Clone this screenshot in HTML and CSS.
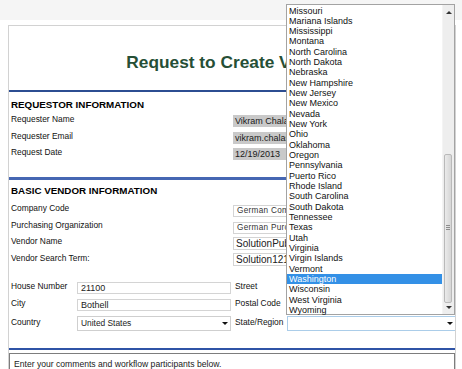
FILE: index.html
```html
<!DOCTYPE html>
<html lang="en">
<head>
    <meta charset="UTF-8">
    <meta name="viewport" content="width=device-width, initial-scale=1.0">
    <title>Request to Create Vendor</title>
    <link rel="stylesheet" href="styles.css">
</head>
<body>
    <div class="topbar"></div>
    <div class="page">
        <h1 class="title">Request to Create Vendor</h1>
        <div class="rule rule-thin"></div>

        <div class="section">
            <h2 class="section-head">REQUESTOR INFORMATION</h2>
            <div class="fields requestor">
                <div class="label">Requester Name</div>
                <div class="value"><span class="readonly">Vikram Chalasani</span></div>
                <div class="label">Requester Email</div>
                <div class="value"><span class="readonly">vikram.chalasani@contoso.com</span></div>
                <div class="label">Request Date</div>
                <div class="value"><span class="readonly short">12/19/2013</span></div>
            </div>
        </div>

        <div class="rule rule-thick"></div>

        <div class="section">
            <h2 class="section-head second">BASIC VENDOR INFORMATION</h2>
            <div class="fields vendor">
                <div class="label">Company Code</div>
                <div class="value"><span class="box small">German Company Code</span></div>
                <div class="label">Purchasing Organization</div>
                <div class="value"><span class="box small">German Purchasing Org</span></div>
                <div class="label">Vendor Name</div>
                <div class="value"><span class="box big">SolutionPublishing</span></div>
                <div class="label">Vendor Search Term:</div>
                <div class="value"><span class="box big">Solution121913</span></div>
            </div>

            <div class="address">
                <div class="label">House Number</div>
                <div class="value"><span class="box addr">21100</span></div>
                <div class="label">Street</div>
                <div class="value"><span class="box addr wide">Bothell Everett Hwy</span></div>

                <div class="label">City</div>
                <div class="value"><span class="box addr">Bothell</span></div>
                <div class="label">Postal Code</div>
                <div class="value"><span class="box addr wide">98021</span></div>

                <div class="label">Country</div>
                <div class="value"><span class="select">United States<i class="arrow"></i></span></div>
                <div class="label">State/Region</div>
                <div class="value"><span class="select focused wide"><i class="arrow"></i></span></div>
            </div>
        </div>

        <div class="rule rule-mid"></div>
        <div class="comments">Enter your comments and workflow participants below.</div>
    </div>

    <div class="state-list">
        <div class="options">
            <div class="option">Missouri</div>
            <div class="option">Mariana Islands</div>
            <div class="option">Mississippi</div>
            <div class="option">Montana</div>
            <div class="option">North Carolina</div>
            <div class="option">North Dakota</div>
            <div class="option">Nebraska</div>
            <div class="option">New Hampshire</div>
            <div class="option">New Jersey</div>
            <div class="option">New Mexico</div>
            <div class="option">Nevada</div>
            <div class="option">New York</div>
            <div class="option">Ohio</div>
            <div class="option">Oklahoma</div>
            <div class="option">Oregon</div>
            <div class="option">Pennsylvania</div>
            <div class="option">Puerto Rico</div>
            <div class="option">Rhode Island</div>
            <div class="option">South Carolina</div>
            <div class="option">South Dakota</div>
            <div class="option">Tennessee</div>
            <div class="option">Texas</div>
            <div class="option">Utah</div>
            <div class="option">Virginia</div>
            <div class="option">Virgin Islands</div>
            <div class="option">Vermont</div>
            <div class="option selected">Washington</div>
            <div class="option">Wisconsin</div>
            <div class="option">West Virginia</div>
            <div class="option">Wyoming</div>
        </div>
        <div class="scrollbar">
            <i class="scroll-up"></i>
            <div class="thumb"><i class="grip"></i></div>
            <i class="scroll-down"></i>
        </div>
    </div>
</body>
</html>
```

FILE: styles.css
```css
body {
    margin: 0;
    height: 369px;
    background: #fff;
    font-family: "Liberation Sans", Arial, sans-serif;
    color: #111;
    overflow: hidden;
}
.topbar {
    height: 20px;
    background: #f5f5f5;
}
.page {
    margin: 5px 0 0 8px;
    width: 446px;
    height: 343px;
    border: 1px solid #d2d2d2;
    border-bottom: none;
    background: #fff;
    overflow: hidden;
}
.title {
    margin: 0;
    height: 64px;
    padding-top: 26px;
    box-sizing: border-box;
    font-size: 17.3px;
    line-height: 20px;
    font-weight: bold;
    text-align: center;
    color: #264f36;
}
.rule-thin {
    border-top: 2px solid #2c4d92;
}
.rule-thick {
    margin-top: 16px;
    border-top: 3px solid #4667b3;
}
.rule-mid {
    margin-top: 16px;
    border-top: 2px solid #2f53a6;
}
.section {
    padding-left: 2px;
}
.section-head {
    margin: 7px 0 0;
    font-size: 9.8px;
    line-height: 12px;
    font-weight: bold;
    color: #000;
}
.section-head.second {
    margin-top: 5px;
}
.label {
    font-size: 8.4px;
    white-space: nowrap;
    color: #111;
}
.value {
    overflow: hidden;
    white-space: nowrap;
}
.fields {
    display: grid;
    grid-template-columns: 222px 1fr;
    align-items: center;
}
.requestor {
    grid-template-rows: repeat(3, 16.5px);
}
.vendor {
    margin-top: 3px;
    grid-template-rows: repeat(4, 16.8px);
}
.readonly {
    display: inline-block;
    width: 160px;
    height: 12px;
    margin-top: 2px;
    padding: 0 2px;
    background: #c9c9c9;
    font-size: 9px;
    line-height: 12px;
    color: #1a1a1a;
}
.box {
    display: inline-block;
    width: 170px;
    padding: 0 3px;
    border: 1px solid #d4d4d4;
    background: #fff;
    box-sizing: border-box;
}
.box.small {
    height: 12px;
    font-size: 8.2px;
    line-height: 10px;
    letter-spacing: 0.3px;
    color: #333;
}
.box.big {
    height: 13px;
    padding-left: 2px;
    font-size: 10px;
    line-height: 11px;
    color: #222;
}
.address {
    display: grid;
    grid-template-columns: 66px 155px 55px 169px;
    grid-template-rows: 17px 17px 20px;
    align-items: center;
    margin-top: 11px;
}
.address .label:nth-child(4n+3) {
    padding-left: 3px;
}
.box.addr {
    width: 154px;
    height: 12px;
    font-size: 9px;
    line-height: 10px;
    color: #222;
}
.box.wide,
.select.wide {
    width: 169px;
}
.select {
    position: relative;
    display: block;
    width: 154px;
    height: 15px;
    margin-top: 3px;
    padding-left: 3px;
    border: 1px solid #cfcfcf;
    box-sizing: border-box;
    font-size: 8.4px;
    line-height: 13px;
    color: #222;
}
.select.focused {
    border-color: #abcde9;
}
.arrow {
    position: absolute;
    right: 2px;
    top: 5px;
    border-left: 3px solid transparent;
    border-right: 3px solid transparent;
    border-top: 3px solid #111;
}
.comments {
    margin-top: 3px;
    height: 30px;
    padding: 4px 4px 0;
    border: 1px solid #7d7d7d;
    font-size: 8.6px;
    line-height: 12px;
    color: #1a1a1a;
}

/* open state/region dropdown */
.state-list {
    position: absolute;
    left: 286px;
    top: 4px;
    width: 169px;
    height: 311px;
    display: flex;
    border: 1px solid #a3a3a3;
    box-sizing: border-box;
    background: #fff;
}
.options {
    flex: 1;
    padding-top: 0.5px;
}
.option {
    height: 10.33px;
    padding-left: 2px;
    font-size: 9px;
    line-height: 10.33px;
    color: #111;
    white-space: nowrap;
}
.option.selected {
    background: #3390e6;
    color: #fff;
}
.scrollbar {
    position: relative;
    width: 11px;
    background: #eeeeee;
    border-left: 1px solid #f4f4f4;
}
.scroll-up,
.scroll-down {
    position: absolute;
    left: 3px;
    border-left: 3px solid transparent;
    border-right: 3px solid transparent;
}
.scroll-up {
    top: 6px;
    border-bottom: 3px solid #333;
}
.scroll-down {
    bottom: 5px;
    border-top: 3px solid #333;
}
.thumb {
    position: absolute;
    left: 1px;
    top: 149px;
    width: 8px;
    height: 149px;
    border: 1px solid #b9b9b9;
    border-radius: 2px;
    box-sizing: border-box;
    background: linear-gradient(to right, #eaeaea, #d6d6d6);
}
.grip {
    position: absolute;
    left: 1px;
    top: 70px;
    width: 4px;
    height: 5px;
    background: repeating-linear-gradient(to bottom, #8c8c8c 0 1px, transparent 1px 2px);
}
```
